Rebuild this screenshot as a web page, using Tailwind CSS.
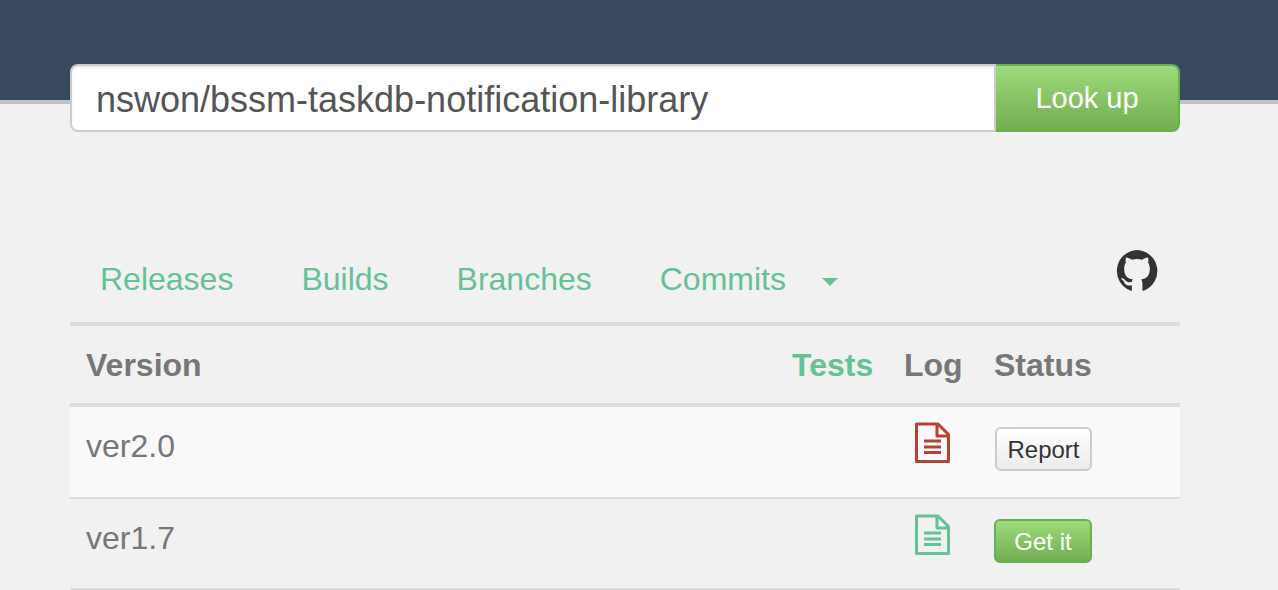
<!DOCTYPE html>
<html lang="en">
<head>
<meta charset="utf-8">
<meta name="viewport" content="width=device-width, initial-scale=1">
<title>Package lookup</title>
<script src="https://cdn.jsdelivr.net/npm/@tailwindcss/browser@4"></script>
</head>
<body class="min-h-screen overflow-x-hidden bg-[#f1f1f1] font-['Liberation_Sans',Arial,sans-serif] text-[32px] leading-10 text-[#777777]">
<header class="h-[104px] border-b-4 border-[#bdc3c7] bg-[#38485e]"></header>
<main class="-mt-10 pr-[98px] pl-[70px]">
  <form class="relative flex h-[68px]" onsubmit="return false">
    <input type="text" aria-label="Repository" value="nswon/bssm-taskdb-notification-library" class="min-w-0 flex-1 rounded-l-lg border-2 border-[#cccccc] bg-white px-6 pt-1 text-[36px] text-[#555555] shadow-[inset_0_2px_2px_rgba(0,0,0,0.075)] outline-none">
    <button type="submit" class="w-[184px] rounded-r-lg border-2 border-l-0 border-[#67ae55] bg-linear-to-b from-[#9edb7a] to-[#73ae52] text-[29px] text-white">Look up</button>
  </form>
  <nav class="mt-[118px] flex h-[72px] items-start justify-between pr-[22px] pl-[30px]" aria-label="Versions">
    <ul class="flex gap-[68px] pt-[9px] text-[#65c294]">
      <li><a href="#releases">Releases</a></li>
      <li><a href="#builds">Builds</a></li>
      <li><a href="#branches">Branches</a></li>
      <li><a href="#commits" class="flex items-center gap-9">Commits
        <svg class="mt-1.5 h-2 w-4" viewBox="0 0 16 8" fill="currentColor" aria-hidden="true"><path d="M0 0h16L8 8z"/></svg></a></li>
    </ul>
    <a href="#github" aria-label="GitHub" class="text-[#333333]">
      <svg class="h-[42px] w-[42px]" viewBox="1 1 41 41" fill="currentColor" aria-hidden="true"><path d="M21.500 1A20.500 20.500 0 0 0 15.500 40.800C16.500 41 16.500 40.300 16.500 39.500V35.500C11 36.500 9.500 34 8.800 32C8.300 30.800 7.300 30 6.300 29.500C5.500 28.500 6.800 28.300 8 28.800C10.500 30 10.500 33.200 16.500 32.300C16.600 31 17 30.300 17.600 29.700C12 28.900 9 26 9 19.500C9 16.700 9.600 14.700 10.700 13.300C10.200 11.700 10.200 9.800 10.900 8.300C12.700 8.200 14.500 9.200 16.300 10.400C19.700 9.700 23.300 9.700 26.700 10.400C28.500 9.200 30.300 8.200 32.100 8.300C32.800 9.800 32.800 11.700 32.300 13.300C33.400 14.700 34 16.700 34 19.500C34 26 31 28.900 25.400 29.700C26.500 30.600 26.800 32 26.800 34V39.500C26.800 40.500 27.200 41 28 40.700A20.500 20.500 0 0 0 21.500 1Z"/></svg>
    </a>
  </nav>
  <table class="w-full table-fixed border-separate border-spacing-0 text-left">
    <colgroup><col><col class="w-[112px]"><col class="w-[90px]"><col class="w-[202px]"></colgroup>
    <thead>
      <tr class="h-[85px] *:border-y-4 *:border-[#dddddd] *:px-4">
        <th scope="col">Version</th>
        <th scope="col"><a href="#tests" class="text-[#65c294]">Tests</a></th>
        <th scope="col">Log</th>
        <th scope="col">Status</th>
      </tr>
    </thead>
    <tbody>
      <tr class="h-[92px] bg-[#f9f9f9] align-top *:border-b-2 *:border-[#dddddd] *:px-4">
        <td class="pt-[19px]">ver2.0</td>
        <td></td>
        <td class="pt-[15px]"><a href="#log-2.0" aria-label="Build log for ver2.0" class="flex text-[#b54334]">
          <svg class="ml-[11px] h-[41px] w-[35px]" viewBox="0 0 35 41" fill="none" stroke="currentColor" stroke-width="3" stroke-linejoin="round" aria-hidden="true"><path d="M1.500 2H23L33.500 12.500V39.500H1.500zM22 2V14H33.500M9 19H26M9 25H26M9 30.500H26"/></svg></a></td>
        <td class="pt-5"><button type="button" class="ml-px block h-11 w-[97px] rounded-md border-2 border-[#cccccc] bg-linear-to-b from-white to-[#ebebeb] pt-0.5 text-2xl text-[#333333]">Report</button></td>
      </tr>
      <tr class="h-[91px] align-top *:border-b-2 *:border-[#dddddd] *:px-4">
        <td class="pt-[19px]">ver1.7</td>
        <td></td>
        <td class="pt-[15px]"><a href="#log-1.7" aria-label="Build log for ver1.7" class="flex text-[#65c294]">
          <svg class="ml-[11px] h-[41px] w-[35px]" viewBox="0 0 35 41" fill="none" stroke="currentColor" stroke-width="3" stroke-linejoin="round" aria-hidden="true"><path d="M1.500 2H23L33.500 12.500V39.500H1.500zM22 2V14H33.500M9 19H26M9 25H26M9 30.500H26"/></svg></a></td>
        <td class="pt-5"><button type="button" class="block h-11 w-[98px] rounded-md border-2 border-[#67ae55] bg-linear-to-b from-[#9edb7a] to-[#73ae52] pt-0.5 text-2xl text-white">Get it</button></td>
      </tr>
    </tbody>
  </table>
</main>
</body>
</html>
